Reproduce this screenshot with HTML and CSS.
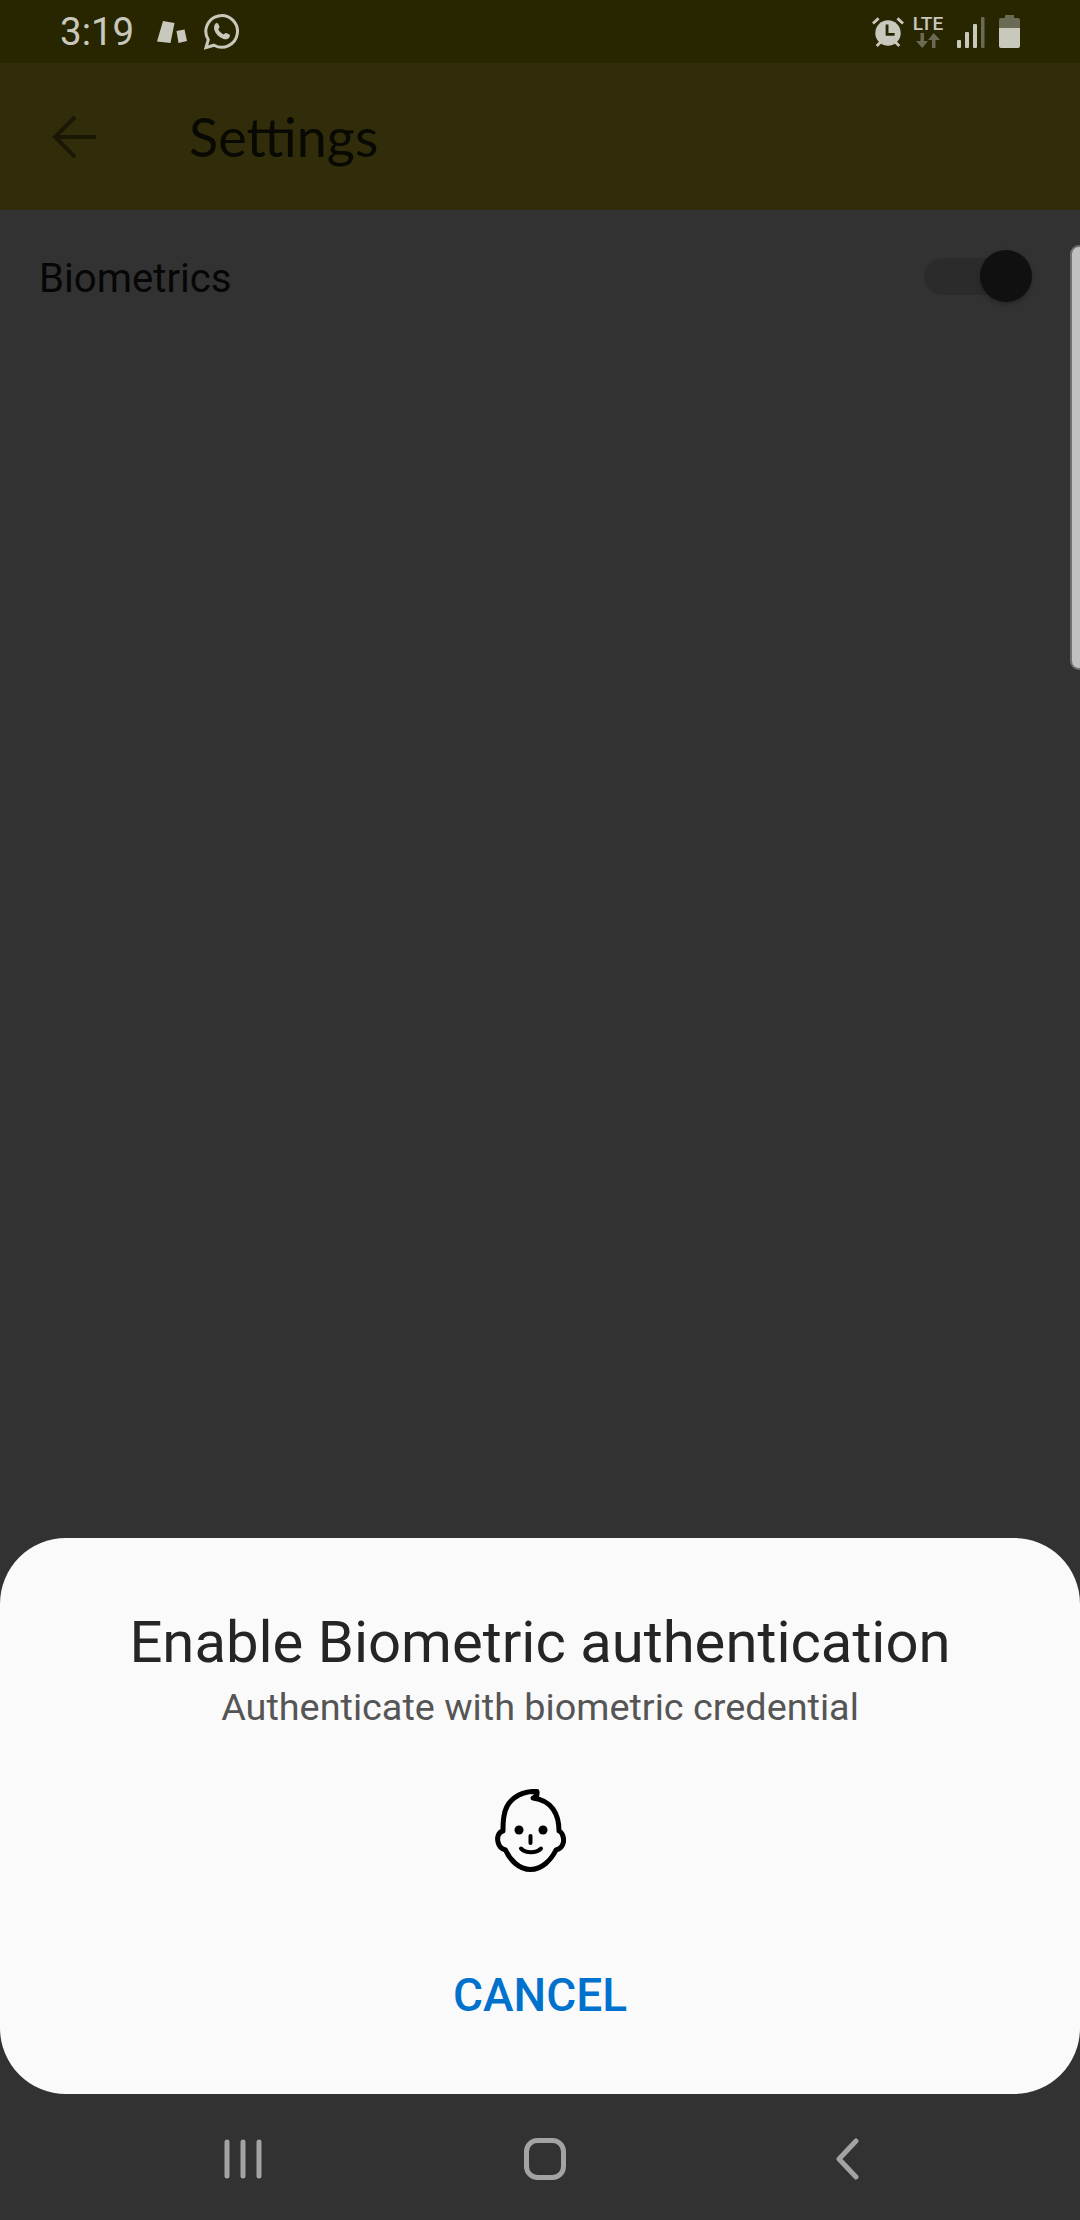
FILE: index.html
```html
<!DOCTYPE html>
<html lang="en">
<head>
<meta charset="utf-8">
<title>Settings</title>
<link rel="stylesheet" href="styles.css">
</head>
<body>
<div class="screen">
  <header class="status">
    <div class="status-left">
      <span class="time">3:19</span>
      <svg class="ic-cards" width="30" height="24" viewBox="0 0 30 24"><path class="lt" d="M6 1 L17.500 3 L13.500 23 L0 21.500 Z"/><path class="lt" d="M19.500 11 L27.500 9.500 L30 21 L21.500 23 Z"/></svg>
      <svg class="ic-wa" width="36" height="36" viewBox="0 0 36 36"><path class="st" fill="none" stroke-width="3" d="M3 33.500 L5.300 25.800 A15.800 15.800 0 1 1 11 31.200 Z"/><path class="lt" d="M12.500 9.500 c1-.8 2-.8 2.500 0 l1.500 3.200 c.3.7-.8 1.800-1.300 2.500 c1.200 2.400 3 4.100 5.600 5.400 c.8-.7 1.600-1.900 2.400-1.500 l3.200 1.500 c.8.400 .6 1.500 .2 2.400 c-1 2-3.700 2.800-6 2 c-4.500-1.500-7.800-4.700-9.300-9 c-.8-2.500 0-5 1.200-6.500 Z"/></svg>
    </div>
    <div class="status-right">
      <svg class="ic-alarm" width="32" height="32" viewBox="0 0 34 34"><path class="st" fill="none" stroke-width="3" d="M1 8 L7 2.500 M33 8 L27 2.500 M5 32 L9 28 M29 32 L25 28"/><circle class="lt" cx="17" cy="18" r="13.500"/><path fill="none" stroke="#282600" stroke-width="3" d="M16 9 V19.500 H24"/></svg>
      <div class="lte">
        <span class="lte-text">LTE</span>
        <svg width="24" height="15" viewBox="0 0 24 15"><path class="dim" d="M4.500 0 H8 V8 H12 L6.300 15 L0 8 H4.500 Z"/><path class="dim" d="M16 15 H19.500 V7 H24 L17.800 0 L12 7 H16 Z"/></svg>
      </div>
      <svg class="ic-signal" width="28" height="31" viewBox="0 0 28 31"><rect class="lt" x="0" y="23" width="4" height="8" rx="1"/><rect class="lt" x="8" y="15" width="4" height="16" rx="1"/><rect class="lt" x="16" y="7" width="4" height="24" rx="1"/><rect class="dim" x="24" y="0" width="3.500" height="31" rx="1"/></svg>
      <svg class="ic-batt" width="21" height="33" viewBox="0 0 21 33"><path class="dim" d="M6 0 H15 V3 H19 a2 2 0 0 1 2 2 V13 H0 V5 a2 2 0 0 1 2-2 H6 Z"/><path class="lt" d="M0 13 H21 V31 a2 2 0 0 1-2 2 H2 a2 2 0 0 1-2-2 Z"/></svg>
    </div>
  </header>

  <div class="appbar">
    <svg class="back" width="44" height="44" viewBox="0 0 44 44"><path fill="none" stroke="#1a1804" stroke-width="4" d="M44 22 H3 M23 2 L3 22 L23 42"/></svg>
    <h1 class="appbar-title">Settings</h1>
  </div>

  <main class="content">
    <div class="row">
      <span class="row-label">Biometrics</span>
      <span class="switch"><span class="track"></span><span class="thumb"></span></span>
    </div>
    <div class="edge-handle"></div>
  </main>

  <section class="sheet">
    <h2 class="sheet-title">Enable Biometric authentication</h2>
    <p class="sheet-sub">Authenticate with biometric credential</p>
    <svg class="face" width="71" height="83" viewBox="0 0 71 83">
      <path fill="none" stroke="#000" stroke-width="5" stroke-linejoin="round" stroke-linecap="round" d="M42 2.500 C24 1.500 11 12 9 27 C8 32 8 37 8 42 C3 43 2 49 3 53 C4 58 7 60 10.500 61 C15 71 24 80.500 35.500 80.500 C47 80.500 56 71 61 61 C65 60 67.500 58 68.500 53 C69 48 67 43 64 42 C64 34 63 27 58 20 C53 13 46 10 38 9 C41 8 42.500 6 42 2.500 Z"/>
      <circle cx="24" cy="41" r="4.500"/><circle cx="48" cy="41" r="4.500"/>
      <path fill="none" stroke="#000" stroke-width="4" stroke-linecap="round" d="M35.500 47 V54 M26 59.500 C31 64.500 41 64.500 46 59.500"/>
    </svg>
    <button class="cancel" type="button">CANCEL</button>
  </section>

  <nav class="navbar">
    <svg class="nav-recent" width="38" height="40" viewBox="0 0 38 40"><path fill="none" stroke="#a3a3a3" stroke-width="5" stroke-linecap="round" d="M3 3 V37 M19 3 V37 M35 3 V37"/></svg>
    <svg class="nav-home" width="42" height="42" viewBox="0 0 42 42"><rect x="2.500" y="2.500" width="37" height="37" rx="11" fill="none" stroke="#a3a3a3" stroke-width="5"/></svg>
    <svg class="nav-back" width="24" height="42" viewBox="0 0 24 42"><path fill="none" stroke="#a3a3a3" stroke-width="5" stroke-linecap="round" stroke-linejoin="round" d="M20 3 L3 21 L20 39"/></svg>
  </nav>
</div>
</body>
</html>
```
FILE: styles.css
```css
* { box-sizing: border-box; }
html, body { margin: 0; padding: 0; }
body { background: #323232; font-family: Roboto, "Liberation Sans", sans-serif; }
.screen { width: 1080px; height: 2220px; display: flex; flex-direction: column; overflow: hidden; }
.lt { fill: #c8c8bd; }
.st { stroke: #c8c8bd; }
.dim { fill: #6a6a55; }

.status { height: 63px; flex: none; background: #282600; display: flex; justify-content: space-between; align-items: center; padding: 0 60px 0 60px; }
.status-left, .status-right { display: flex; align-items: center; }
.time { font-size: 38.5px; color: #c8c8bd; width: 97px; }
.ic-cards { margin-right: 16px; }
.ic-alarm { margin-right: 6px; }
.lte { width: 36px; display: flex; flex-direction: column; align-items: center; margin-right: 11px; }
.lte-text { font-size: 19px; line-height: 18px; font-weight: 500; color: #c8c8bd; }
.ic-signal { margin-right: 14px; margin-top: 2px; }

.appbar { height: 147px; flex: none; background: #312d0a; display: flex; align-items: center; padding-left: 52px; }
.back { margin-right: 93px; }
.appbar-title { margin: 0; font: 400 54px Lato, sans-serif; color: #090903; }

.content { flex: 1; position: relative; }
.row { display: flex; justify-content: space-between; align-items: center; padding: 40px 48px 0 39px; }
.row-label { font-size: 40.2px; color: #060606; position: relative; top: 2px; }
.switch { position: relative; width: 108px; height: 52px; display: block; }
.track { position: absolute; left: 0; right: 16px; top: 8px; height: 37px; border-radius: 19px; background: #2b2b2b; }
.thumb { position: absolute; right: 0; top: 0; width: 52px; height: 52px; border-radius: 50%; background: #101010; box-shadow: 0 2px 4px rgba(0,0,0,.25); }
.edge-handle { position: absolute; right: -8px; top: 35px; width: 18px; height: 425px; background: #c0c0c0; border: 2px solid #6f6f6f; border-radius: 12px; }

.sheet { height: 556px; flex: none; background: #fafafa; border-radius: 66px; display: flex; flex-direction: column; align-items: center; padding-top: 70px; }
.sheet-title { margin: 0; font-size: 58px; line-height: 68px; font-weight: 400; color: #252525; }
.sheet-sub { margin: 9px 0 0; font-size: 37.8px; line-height: 44px; color: #555555; }
.face { margin: 60px 19px 0 0; }
.cancel { margin-top: 96px; padding: 0; border: 0; background: none; font: 500 46px Roboto, sans-serif; color: #0072ce; }

.navbar { height: 126px; flex: none; display: flex; align-items: center; padding-top: 4px; }
.nav-recent { margin-left: 224px; }
.nav-home { margin-left: 262px; }
.nav-back { margin-left: 270px; }
```
